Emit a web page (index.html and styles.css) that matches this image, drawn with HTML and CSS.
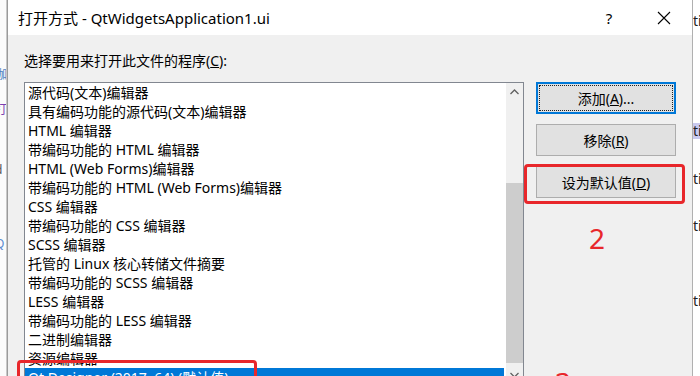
FILE: index.html
```html
<!DOCTYPE html>
<html lang="zh-CN">
<head>
    <meta charset="UTF-8">
    <title>打开方式</title>
    <link rel="stylesheet" href="styles.css">
</head>
<body>
<div class="screen">
    <div class="bg-left">
        <span class="frag f1">咖</span>
        <span class="frag f2">打</span>
        <span class="frag f3">d</span>
        <span class="frag f4">i</span>
        <span class="frag f5">Q</span>
    </div>

    <div class="dialog">
        <div class="titlebar">
            <span class="title">打开方式 - QtWidgetsApplication1.ui</span>
            <span class="help">?</span>
            <span class="close">
                <svg width="14" height="14" viewBox="0 0 14 14">
                    <path d="M1 1 L13 13 M13 1 L1 13" stroke="#000" stroke-width="1.1" fill="none"/>
                </svg>
            </span>
        </div>

        <div class="content">
            <div class="prompt">选择要用来打开此文件的程序(<u>C</u>):</div>
            <div class="main">
                <div class="listbox">
                    <ul class="items">
                        <li>源代码(文本)编辑器</li>
                        <li>具有编码功能的源代码(文本)编辑器</li>
                        <li>HTML 编辑器</li>
                        <li>带编码功能的 HTML 编辑器</li>
                        <li>HTML (Web Forms)编辑器</li>
                        <li>带编码功能的 HTML (Web Forms)编辑器</li>
                        <li>CSS 编辑器</li>
                        <li>带编码功能的 CSS 编辑器</li>
                        <li>SCSS 编辑器</li>
                        <li>托管的 Linux 核心转储文件摘要</li>
                        <li>带编码功能的 SCSS 编辑器</li>
                        <li>LESS 编辑器</li>
                        <li>带编码功能的 LESS 编辑器</li>
                        <li>二进制编辑器</li>
                        <li>资源编辑器</li>
                        <li class="selected">Qt Designer (2017, 64) (默认值)</li>
                    </ul>
                    <div class="scrollbar">
                        <div class="arrow">
                            <svg width="9" height="6" viewBox="0 0 9 6"><path d="M0.5 5 L4.5 1 L8.5 5" stroke="#606060" stroke-width="1.3" fill="none"/></svg>
                        </div>
                        <div class="thumb"></div>
                        <div class="arrow down">
                            <svg width="9" height="6" viewBox="0 0 9 6"><path d="M0.5 1 L4.5 5 L8.5 1" stroke="#606060" stroke-width="1.3" fill="none"/></svg>
                        </div>
                    </div>
                </div>

                <div class="buttons">
                    <button class="btn focused">添加(<u>A</u>)...</button>
                    <button class="btn">移除(<u>R</u>)</button>
                    <button class="btn">设为默认值(<u>D</u>)</button>
                </div>
            </div>
        </div>
    </div>

    <div class="bg-right">
        <span class="rfrag r1">ti</span>
        <span class="rfrag r2 hl">ti</span>
        <span class="rfrag r3">ti</span>
        <span class="rfrag r4">ti</span>
        <span class="rfrag r5">ti</span>
    </div>

    <!-- 标注 -->
    <div class="mark mark-btn"></div>
    <div class="mark mark-row"></div>
    <span class="num num2">2</span>
    <span class="num num3">3</span>
</div>
</body>
</html>
```

FILE: styles.css
```css
body{
    margin: 0;
    font-family: "Noto Sans", "Noto Sans CJK SC", sans-serif;
    color: #000;
}
.screen{
    position: relative;
    width: 700px;
    height: 376px;
    display: flex;
    overflow: hidden;
    background: #fff;
}

/* 背景窗口露出的部分 */
.bg-left{
    width: 7px;
    flex: none;
    display: flex;
    flex-direction: column;
    overflow: hidden;
    background: #fbfbfb;
    border-right: 1px solid #c8c8c8;
    box-sizing: border-box;
}
.frag{
    font-size: 12px;
    line-height: 12px;
    margin-left: -5px;
    white-space: nowrap;
}
.f1{ margin-top: 69px; color: #4a7fc0; }
.f2{ margin-top: 23px; color: #7a3fb0; }
.f3{ margin-top: 48px; color: #555; }
.f4{ margin-top: 4px; color: #555; }
.f5{ margin-top: 46px; color: #5a8ad0; }

.bg-right{
    width: 8px;
    flex: none;
    display: flex;
    flex-direction: column;
    overflow: hidden;
    background: #fff;
    border-left: 1px solid #b0b0b0;
    box-sizing: border-box;
}
.rfrag{
    font-size: 14px;
    line-height: 16px;
    color: #222;
}
.r1{ margin-top: 13px; }
.r2{ margin-top: 94px; }
.r3{ margin-top: 32px; }
.r4{ margin-top: 31px; }
.r5{ margin-top: 59px; }
.hl{ background: #c9c9ee; }

/* 对话框 */
.dialog{
    width: 685px;
    flex: none;
    display: flex;
    flex-direction: column;
    background: #f0f0f0;
    border-left: 1px solid #9a9a9a;
    box-sizing: border-box;
    overflow: hidden;
}
.titlebar{
    height: 35px;
    flex: none;
    display: flex;
    align-items: center;
    background: #fff;
    padding-left: 10px;
}
.title{
    font-size: 15px;
    flex: 1;
}
.help{
    font-size: 15px;
    width: 20px;
    text-align: center;
    margin-right: 38px;
}
.close{
    width: 14px;
    height: 14px;
    margin-right: 21px;
    display: flex;
}

.content{
    padding: 16px 0 0 16px;
}
.prompt{
    font-size: 14px;
    line-height: 20px;
}
.main{
    display: flex;
    margin-top: 11px;
}
.listbox{
    width: 500px;
    height: 320px;
    flex: none;
    display: flex;
    background: #fff;
    border: 1px solid #828790;
    box-sizing: border-box;
}
.items{
    list-style: none;
    margin: 0;
    padding: 0 2px 0 0;
    flex: 1;
}
.items li{
    font-size: 14px;
    line-height: 19px;
    height: 19px;
    padding-left: 3px;
    white-space: nowrap;
}
.items li.selected{
    background: #0078d7;
    color: #fff;
}
.scrollbar{
    width: 17px;
    flex: none;
    display: flex;
    flex-direction: column;
    background: #f0f0f0;
}
.arrow{
    height: 17px;
    display: flex;
    align-items: center;
    justify-content: center;
}
.thumb{
    height: 180px;
    margin: 83px 0 3px;
    background: #cdcdcd;
}

.buttons{
    width: 140px;
    margin-left: 12px;
    display: flex;
    flex-direction: column;
    gap: 10px;
}
.btn{
    height: 32px;
    font-family: "Noto Sans", "Noto Sans CJK SC", sans-serif;
    font-size: 14px;
    color: #000;
    background: #e1e1e1;
    border: 1px solid #adadad;
    padding: 0;
}
.btn.focused{
    border: 2px solid #0078d7;
    outline: 1px dotted #222;
    outline-offset: -4px;
}

/* 红色标注 */
.mark{
    position: absolute;
    border: 3px solid #e8272b;
    border-radius: 4px;
    box-sizing: border-box;
}
.mark-btn{
    left: 524px;
    top: 164px;
    width: 161px;
    height: 40px;
}
.mark-row{
    left: 17px;
    top: 360px;
    width: 240px;
    height: 40px;
}
.num{
    position: absolute;
    font-family: "Noto Sans", sans-serif;
    font-size: 28px;
    line-height: 28px;
    color: #e8272b;
}
.num2{
    left: 589px;
    top: 224px;
}
.num3{
    left: 555px;
    top: 368px;
}
```
